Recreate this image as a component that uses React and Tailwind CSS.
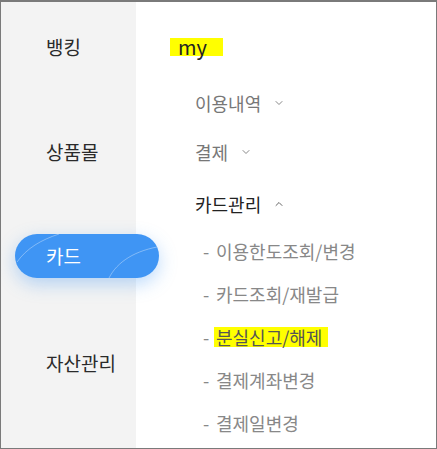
import { ChevronDown, ChevronUp } from "lucide-react";

const font = { fontFamily: '"Noto Sans CJK KR", "Noto Sans", sans-serif' };

const subItems = [
  "이용한도조회/변경",
  "카드조회/재발급",
  "분실신고/해제",
  "결제계좌변경",
  "결제일변경",
];

const App = () => {
  return (
    <div
      style={font}
      className="w-[437px] h-[449px] border border-[#7a7a7a] border-t-2 flex bg-white overflow-hidden"
    >
      {/* left side menu */}
      <div className="w-[135px] shrink-0 bg-[#f3f3f3] flex flex-col">
        <div className="h-[44px] mt-[23px] flex items-center pl-[45px] text-[19px] text-[#2a2a2a]">
          뱅킹
        </div>
        <div className="h-[44px] mt-[61px] flex items-center pl-[45px] text-[19px] text-[#2a2a2a]">
          상품몰
        </div>
        <div className="relative z-10 h-[44px] w-[144px] ml-[14px] mt-[60px] rounded-full bg-[#3f95f4] shadow-[0_6px_18px_rgba(63,149,244,0.35)] flex items-center pl-[31px] text-[19px] text-white overflow-hidden">
          <svg
            className="absolute inset-0"
            width="144"
            height="44"
            viewBox="0 0 144 44"
            fill="none"
          >
            <path d="M2 28 C 12 14, 26 6, 44 0" stroke="rgba(255,255,255,0.35)" strokeWidth="1" />
            <path d="M94 44 C 102 28, 120 16, 148 12" stroke="rgba(255,255,255,0.35)" strokeWidth="1" />
          </svg>
          <span className="relative">카드</span>
        </div>
        <div className="h-[44px] mt-[63px] flex items-center pl-[45px] text-[19px] text-[#2a2a2a]">
          자산관리
        </div>
      </div>

      {/* right content */}
      <div className="flex-1 flex flex-col">
        <div className="mt-[36px] ml-[34px] w-[53px] h-[18px] bg-[#ffff00] flex items-center pl-[8px] text-[20px] leading-none text-[#222]">
          my
        </div>
        <div className="mt-[35px] ml-[59px] h-[24px] flex items-center gap-[12px] text-[18px] text-[#777]">
          이용내역
          <ChevronDown size={12} strokeWidth={2} className="text-[#888]" />
        </div>
        <div className="mt-[25px] ml-[59px] h-[24px] flex items-center gap-[12px] text-[18px] text-[#777]">
          결제
          <ChevronDown size={12} strokeWidth={2} className="text-[#888]" />
        </div>
        <div className="mt-[28px] ml-[59px] h-[24px] flex items-center gap-[12px] text-[18px] text-[#222]">
          카드관리
          <ChevronUp size={12} strokeWidth={2} className="text-[#666]" />
        </div>
        <div className="mt-[23px] ml-[67px] flex flex-col gap-[19px]">
          {subItems.map((item) => (
            <div key={item} className="h-[24px] flex items-center text-[18px] text-[#888]">
              <span className="w-[13px]">-</span>
              {item === "분실신고/해제" ? (
                <span className="bg-[#ffff00] -ml-[2px] pl-[2px] pr-[6px] h-[20px] flex items-center text-[#555]">
                  {item}
                </span>
              ) : (
                <span>{item}</span>
              )}
            </div>
          ))}
        </div>
      </div>
    </div>
  );
};

export default App;
